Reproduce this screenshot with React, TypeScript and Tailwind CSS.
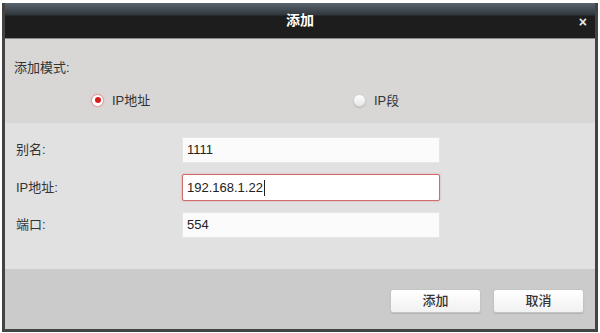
import React from 'react';

const font = 'font-["Liberation_Sans","Noto_Sans_CJK_SC",sans-serif]';

const Radio = ({ checked, label }: { checked?: boolean; label: string }) => (
    <div className="flex items-center gap-[8px]">
        {checked ? (
            <span className="w-[13px] h-[13px] rounded-full border border-[#e09a9a] bg-white shadow-[0_0_2px_#e8b0b0] flex items-center justify-center">
                <span className="w-[6px] h-[6px] rounded-full bg-[#d41f1f]" />
            </span>
        ) : (
            <span className="w-[13px] h-[13px] rounded-full border border-[#d0d0d0] bg-[linear-gradient(to_bottom,#ffffff,#e6e6e6)] shadow-[0_1px_1px_rgba(0,0,0,0.15)]" />
        )}
        <span className="text-[13px] text-[#333]">{label}</span>
    </div>
);

const Field = ({ label, value, focused }: { label: string; value: string; focused?: boolean }) => (
    <div className="flex items-center">
        <span className="w-[177px] pl-[11px] text-[13px] text-[#333]">{label}</span>
        <div
            className={
                focused
                    ? 'w-[258px] h-[27px] bg-white border border-[#cf6b6b] rounded-[2px] shadow-[0_0_2px_#e29a9a] flex items-center pl-[4px] text-[13px] text-[#222]'
                    : 'w-[258px] h-[26px] bg-[#fbfbfb] border border-[#e6e6e6] flex items-center pl-[4px] text-[13px] text-[#222]'
            }
        >
            {value}
            {focused && <span className="w-px h-[16px] bg-[#222] ml-px" />}
        </div>
    </div>
);

const Btn = ({ children }: { children: React.ReactNode }) => (
    <button className="w-[91px] h-[24px] rounded-[3px] border border-[#c4c4c4] bg-[linear-gradient(to_bottom,#ffffff,#f1f1f1)] shadow-[0_1px_1px_rgba(0,0,0,0.12)] text-[13px] text-[#333] font-medium">
        {children}
    </button>
);

export default function App() {
    return (
        <div className={`w-[600px] h-[333px] bg-white pt-[3px] px-[2px] ${font}`}>
            <div className="w-[596px] flex flex-col border-x-[3px] border-b-[3px] border-[#434343]">

                <div className="h-[35px] relative flex items-center justify-center bg-[linear-gradient(to_bottom,#59646f_0px,#30363b_12px,#1d1d1d_13px,#1d1d1d_100%)]">
                    <span className="text-[14px] font-bold text-white">添加</span>
                    <span className="absolute right-[8px] top-[9px] text-[14px] font-bold text-[#e8e8e8]">×</span>
                </div>
                <div className="h-px bg-[#8a8a8a]" />

                <div className="h-[84px] bg-[#d8d7d5] flex flex-col pt-[19px]">
                    <span className="pl-[9px] text-[13px] text-[#333]">添加模式:</span>
                    <div className="flex mt-[13px]">
                        <div className="w-[348px] pl-[86px]">
                            <Radio checked label="IP地址" />
                        </div>
                        <Radio label="IP段" />
                    </div>
                </div>

                <div className="h-[146px] bg-[#e1e1e1] flex flex-col pt-[14px] gap-[11px]">
                    <Field label="别名:" value="1111" />
                    <Field label="IP地址:" value="192.168.1.22" focused />
                    <Field label="端口:" value="554" />
                </div>

                <div className="h-[60px] bg-[#cbcbcb] flex justify-end items-start pt-[20px] pr-[11px] gap-[12px]">
                    <Btn>添加</Btn>
                    <Btn>取消</Btn>
                </div>
            </div>
        </div>
    );
}
